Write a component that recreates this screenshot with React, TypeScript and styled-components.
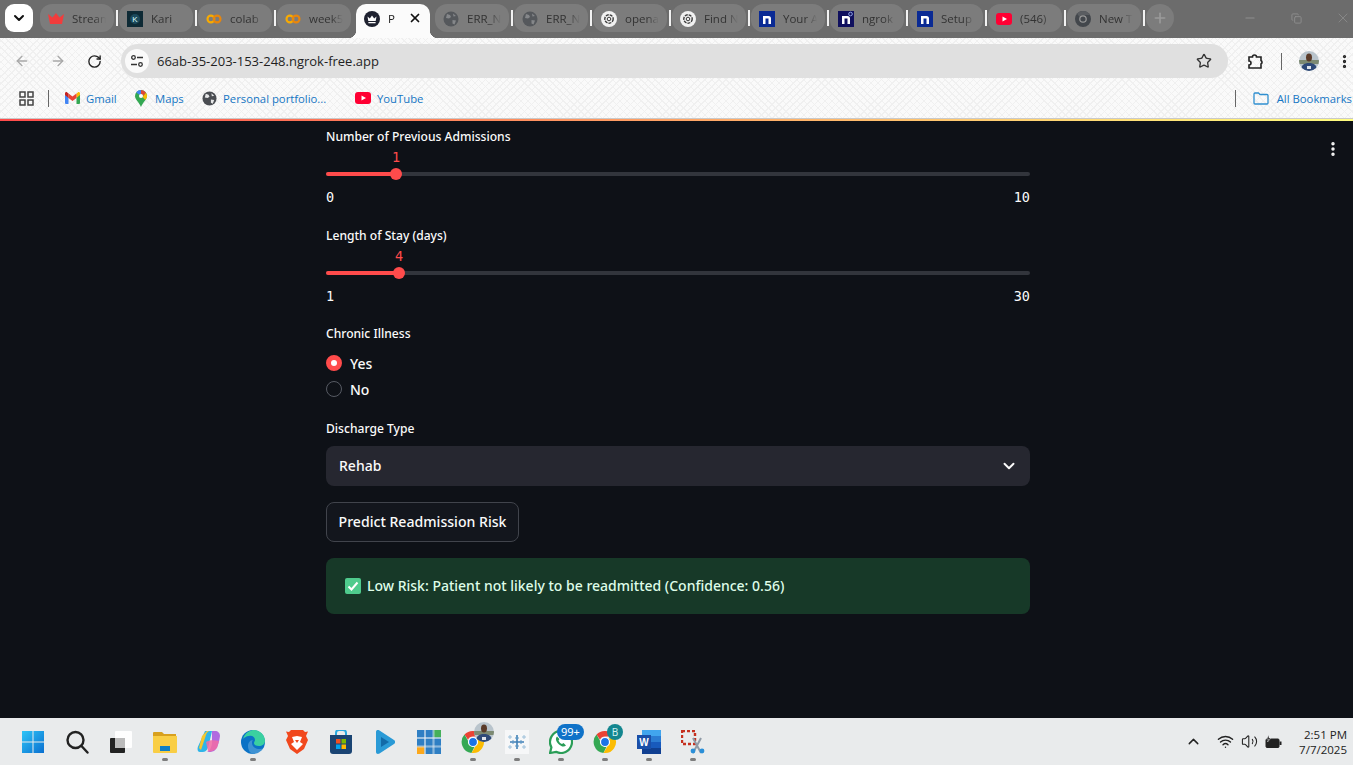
import React from 'react';
import styled, { createGlobalStyle } from 'styled-components';
import {
    ArrowLeft,
    ArrowRight,
    ChevronDown,
    ChevronUp,
    Copy,
    EllipsisVertical,
    Minus,
    Plus,
    RotateCw,
    Star,
    Volume2,
    Wifi,
    X,
} from 'lucide-react';

const GlobalStyle = createGlobalStyle`
    html, body {
        margin: 0;
        padding: 0;
        background: #0e1117;
        overflow: hidden;
    }
    * {
        box-sizing: border-box;
    }
`;

const Crown = ({ color = '#f23c3c', size = 16 }: { color?: string; size?: number }) => (
    <svg width={size} height={size} viewBox="0 0 16 16">
        <path d="M0 3l4.500 3.500L8 2l3.500 4.500L16 3l-2 10H2z" fill={color} />
    </svg>
);

const CrownBadge = () => (
    <svg width="16" height="16" viewBox="0 0 16 16">
        <circle cx="8" cy="8" r="8" fill="#1f2230" />
        <path d="M3.5 5.5l2.3 2L8 4.5l2.2 3 2.3-2-.8 4.5H4.3zM4.4 11h7.2v1.2H4.4z" fill="#fff" />
    </svg>
);

const KariIcon = () => (
    <svg width="16" height="16" viewBox="0 0 16 16">
        <rect width="16" height="16" fill="#0e2a35" />
        <circle cx="8" cy="8" r="5" fill="#1c4a5c" />
        <text x="8" y="11" fontSize="8" fill="#dff" textAnchor="middle" fontFamily="Liberation Sans, sans-serif">K</text>
    </svg>
);

const ColabIcon = () => (
    <svg width="18" height="16" viewBox="0 0 18 16">
        <circle cx="5.5" cy="8" r="3.8" fill="none" stroke="#f9ab00" strokeWidth="2.4" />
        <circle cx="12.5" cy="8" r="3.8" fill="none" stroke="#e8860c" strokeWidth="2.4" />
    </svg>
);

const GlobeIcon = ({ color = '#55585c', land = '#85878a', size = 16 }: { color?: string; land?: string; size?: number }) => (
    <svg width={size} height={size} viewBox="0 0 16 16">
        <circle cx="8" cy="8" r="7.5" fill={color} />
        <path d="M4 3l3 1 1 2-2 1.5-3-.5zM9.5 9l3.5.5-1.5 4-2-1zM10 2.500l3 2.500-2.500.5z" fill={land} />
    </svg>
);

const OpenAiIcon = () => (
    <svg width="16" height="16" viewBox="0 0 16 16">
        <circle cx="8" cy="8" r="8" fill="#f1f1f1" />
        <circle cx="8" cy="8" r="4.200" fill="none" stroke="#3a3a3a" strokeWidth="1.400" strokeDasharray="3 1" />
        <circle cx="8" cy="8" r="1.800" fill="none" stroke="#3a3a3a" strokeWidth="1" />
    </svg>
);

const NgrokIcon = ({ bg = '#0a2a94', dot = false }: { bg?: string; dot?: boolean }) => (
    <svg width="16" height="16" viewBox="0 0 16 16">
        <rect width="16" height="16" fill={bg} />
        <path d="M4 13V5h5.500A2.500 2.500 0 0 1 12 7.500V13H9.500V7.500H6.500V13z" fill="#fff" />
        {dot && <circle cx="12.500" cy="3" r="1.800" fill="none" stroke="#8fa4e8" strokeWidth="1" />}
    </svg>
);

const YoutubeIcon = () => (
    <svg width="16" height="12" viewBox="0 0 16 12">
        <rect width="16" height="12" rx="3" fill="#ff0033" />
        <path d="M6.500 3.500L11 6l-4.500 2.500z" fill="#fff" />
    </svg>
);

const ChromeGray = () => (
    <svg width="16" height="16" viewBox="0 0 16 16">
        <circle cx="8" cy="8" r="8" fill="#43474c" />
        <path d="M8 0a8 8 0 0 1 7 4H8a4 4 0 0 0-3.500 2L2 2.500A8 8 0 0 1 8 0z" fill="#5a5d61" />
        <circle cx="8" cy="8" r="3.800" fill="#9a9a9a" />
        <circle cx="8" cy="8" r="2.600" fill="#43474c" />
    </svg>
);

const ChromeColor = ({ size = 24 }: { size?: number }) => (
    <svg width={size} height={size} viewBox="0 0 24 24">
        <path d="M12 1a11 11 0 0 1 9.500 5.500H12a5.500 5.500 0 0 0-5 3.200L3.500 4.600A11 11 0 0 1 12 1z" fill="#ea4335" />
        <path d="M3.500 4.600L8 12.500a5 5 0 0 0 5.500 4.200L10.500 22.900A11 11 0 0 1 3.500 4.600z" fill="#34a853" />
        <path d="M21.500 6.500A11 11 0 0 1 10.500 22.900l4.500-7.700a5 5 0 0 0 .5-6.500z" fill="#fbbc04" />
        <circle cx="12" cy="12" r="4.500" fill="#1a73e8" stroke="#fff" strokeWidth="1.200" />
    </svg>
);

const GmailIcon = () => (
    <svg width="15" height="12" viewBox="0 0 15 12">
        <path d="M0 2v9a1 1 0 0 0 1 1h2.500V5z" fill="#4285f4" />
        <path d="M15 2v9a1 1 0 0 1-1 1h-2.500V5z" fill="#34a853" />
        <path d="M11.500 1.500V6L15 3V1.500C15 .3 13.700-.3 12.800.4z" fill="#fbbc04" />
        <path d="M3.500 6V1.500L7.500 4.500l4-3V6l-4 3z" fill="#ea4335" />
        <path d="M0 1.500V3l3.500 3V1.500L2.200.4C1.300-.3 0 .3 0 1.500z" fill="#c5221f" />
    </svg>
);

const MapsIcon = () => (
    <svg width="12" height="17" viewBox="0 0 12 17">
        <path d="M6 0a6 6 0 0 1 6 6c0 3.500-4 6-6 11C4 12 0 9.500 0 6a6 6 0 0 1 6-6z" fill="#34a853" />
        <path d="M1.200 2.400A6 6 0 0 1 6 0v4a2 2 0 0 0-1.600.8z" fill="#4285f4" />
        <path d="M6 0a6 6 0 0 1 5 2.800L7.500 7A2 2 0 0 0 6 4z" fill="#ea4335" opacity=".95" />
        <path d="M11 2.800A6 6 0 0 1 12 6c0 1.500-.7 2.700-1.700 4L7.500 7z" fill="#fbbc04" />
        <circle cx="6" cy="6" r="2" fill="#fff" />
    </svg>
);

const FolderIcon = () => (
    <svg width="16" height="14" viewBox="0 0 16 14" fill="none" stroke="#2f8fd0" strokeWidth="1.300">
        <path d="M1 3a1 1 0 0 1 1-1h3.500l1.500 1.500h7a1 1 0 0 1 1 1V12a1 1 0 0 1-1 1H2a1 1 0 0 1-1-1z" />
    </svg>
);

const AppsIcon = () => (
    <svg width="15" height="15" viewBox="0 0 15 15" fill="none" stroke="#444" strokeWidth="1.500">
        <rect x="1" y="1" width="5" height="5" />
        <rect x="9" y="1" width="5" height="5" />
        <rect x="1" y="9" width="5" height="5" />
        <rect x="9" y="9" width="5" height="5" />
    </svg>
);

const SiteInfoIcon = () => (
    <svg width="14" height="14" viewBox="0 0 14 14" fill="none" stroke="#333" strokeWidth="1.300">
        <circle cx="3.500" cy="3.500" r="1.800" />
        <path d="M7 3.500h6M1 10.500h6" />
        <circle cx="10.500" cy="10.500" r="1.800" />
    </svg>
);

const ExtensionIcon = () => (
    <svg width="18" height="18" viewBox="0 0 18 18" fill="none" stroke="#222" strokeWidth="1.600">
        <path d="M3 5h3.500a2 2 0 0 1 4 0H15v3.500a2 2 0 0 1 0 3.500V16H3v-3a2 2 0 0 0 0-4z" />
    </svg>
);

const Avatar = () => (
    <svg width="20" height="20" viewBox="0 0 20 20">
        <clipPath id="avatar-clip">
            <circle cx="10" cy="10" r="10" />
        </clipPath>
        <g clipPath="url(#avatar-clip)">
            <rect width="20" height="20" fill="#b9c4cc" />
            <rect y="9" width="20" height="4" fill="#7d8a72" />
            <ellipse cx="10" cy="6.500" rx="3" ry="4" fill="#5a3a28" />
            <path d="M2 20c0-6 3-8 8-8s8 2 8 8z" fill="#2f4a78" />
            <path d="M8 15h4v3H8z" fill="#dfe4ea" />
        </g>
    </svg>
);

const WindowsIcon = () => (
    <svg width="24" height="24" viewBox="0 0 24 24">
        <defs>
            <linearGradient id="win-grad" x1="0" y1="0" x2="1" y2="1">
                <stop offset="0" stopColor="#2ec5f7" />
                <stop offset="1" stopColor="#0a6fd0" />
            </linearGradient>
        </defs>
        <path d="M1 1h10.500v10.500H1zM12.500 1H23v10.500H12.500zM1 12.500h10.500V23H1zM12.500 12.500H23V23H12.500z" fill="url(#win-grad)" />
    </svg>
);

const SearchIcon = () => (
    <svg width="24" height="24" viewBox="0 0 24 24" fill="none" stroke="#222" strokeWidth="2.400">
        <circle cx="10.500" cy="10" r="8" />
        <path d="M16.500 16l6 6.500" strokeLinecap="round" />
    </svg>
);

const TaskViewIcon = () => (
    <svg width="24" height="24" viewBox="0 0 24 24">
        <rect x="1" y="8" width="15" height="15" rx="1" fill="#222" />
        <rect x="6" y="1" width="17" height="17" rx="1" fill="#fff" opacity=".95" />
        <rect x="6" y="8" width="10" height="10" fill="#bbb" />
    </svg>
);

const ExplorerIcon = () => (
    <svg width="24" height="24" viewBox="0 0 24 24">
        <path d="M0 3a1 1 0 0 1 1-1h8l2 2h12v6H0z" fill="#d8a01e" />
        <path d="M0 6h24v16a1 1 0 0 1-1 1H1a1 1 0 0 1-1-1z" fill="#f9ce45" />
        <path d="M7 16h10v5H7z" fill="#0f7fc4" />
    </svg>
);

const CopilotIcon = () => (
    <svg width="24" height="24" viewBox="0 0 24 24">
        <path d="M8 1h7l-3 13c-1 5-3 8-6 8H3C1 22 0 20 .8 17z" fill="#2fb5e8" />
        <path d="M4 20L9 5c.500-2 2-4 4-4h-3L5 6 2 18z" fill="#f5c62c" />
        <path d="M15 1h3c3 0 5 2 5 5-1 7-3 13-6 15-2 1-5 1-7 1 3-1 4-4 5-8z" fill="#b06be0" />
        <path d="M9 12c3-2 8-2 13-1l-2 7c-3 3-7 4-9 3z" fill="#f26ba5" opacity=".85" />
    </svg>
);

const EdgeIcon = () => (
    <svg width="24" height="24" viewBox="0 0 24 24">
        <circle cx="12" cy="12" r="12" fill="#0b72c6" />
        <path d="M2 9C4 2 10 0 13 0c6 0 11 5 11 11 0 3-3 5-6 5-3 0-5-1-5-3 0-1 1-2 1-3 0-3-3-5-6-4-3 0-5 2-6 3z" fill="#3ad0a0" />
        <path d="M13 24c-3 0-6-3-6-8 0-3 2-6 5-6-1 1-1 2-1 3 0 4 4 6 8 6 2 0 4-1 5-2-2 4-6 7-11 7z" fill="#d8f3fb" opacity=".25" />
    </svg>
);

const BraveIcon = () => (
    <svg width="22" height="24" viewBox="0 0 22 24">
        <path d="M5 0h12l2 2 3-.500L20 6l2 4-4 9-7 5-7-5-4-9 2-4L0 1.500 3 2z" fill="#f1481d" />
        <path d="M11 6l5 1-2 5 3 2-6 6-6-6 3-2-2-5z" fill="#fff" />
        <path d="M9 10h4l-2 3z" fill="#f1481d" />
    </svg>
);

const StoreIcon = () => (
    <svg width="24" height="24" viewBox="0 0 24 24">
        <path d="M7 6V3a3 3 0 0 1 3-3h4a3 3 0 0 1 3 3v3" fill="none" stroke="#29a9e0" strokeWidth="2" />
        <path d="M1 5h22v16a3 3 0 0 1-3 3H4a3 3 0 0 1-3-3z" fill="#1a4473" />
        <rect x="7" y="9" width="4.500" height="4.500" fill="#f25022" />
        <rect x="12.500" y="9" width="4.500" height="4.500" fill="#7fba00" />
        <rect x="7" y="14.500" width="4.500" height="4.500" fill="#00a4ef" />
        <rect x="12.500" y="14.500" width="4.500" height="4.500" fill="#ffb900" />
    </svg>
);

const PlayIcon = () => (
    <svg width="20" height="24" viewBox="0 0 20 24">
        <path d="M1 2c0-2 2-2.500 3.500-1.500L19 10c1.500 1 1.500 3 0 4L4.500 23.500C3 24.500 1 24 1 22z" fill="#2a9ad6" />
        <path d="M6 7l8 5-8 5z" fill="#126aa8" />
    </svg>
);

const GridAppIcon = () => (
    <svg width="24" height="24" viewBox="0 0 24 24">
        <rect width="24" height="24" fill="#2f7fc4" />
        <rect x="16.500" width="7.500" height="7.500" fill="#45b05a" />
        <rect y="16.500" width="7.500" height="7.500" fill="#fca81c" />
        <path d="M7.500 0v24M8.500 0v24M16 0v24M17 0v24M0 7.500h24M0 8.500h24M0 16h24M0 17h24" stroke="#e8eef4" strokeWidth=".6" />
    </svg>
);

const TableauIcon = () => (
    <svg width="24" height="24" viewBox="0 0 24 24">
        <rect width="24" height="24" fill="#f6f7f8" />
        <path d="M12 5v14M5 12h14" stroke="#3f7fb5" strokeWidth="1.600" />
        <path d="M10 8h4M10 16h4M8 10v4M16 10v4" stroke="#5a96c4" strokeWidth="1" />
        <path d="M5 5v4M3 7h4M19 5v4M17 7h4M5 15v4M3 17h4M19 15v4M17 17h4" stroke="#9dc0da" strokeWidth="1" />
    </svg>
);

const WhatsappIcon = () => (
    <svg width="24" height="24" viewBox="0 0 24 24">
        <path d="M12 1a11 11 0 1 1-5 20.800L1 23l1.400-5.700A11 11 0 0 1 12 1z" fill="#fff" stroke="#2a9d57" strokeWidth="2.200" />
        <path d="M8 6.500c-2 2-1 5 1.500 7.500s5.500 3.500 7.500 1.500l-2.500-2.500-1.500 1c-1.500-.5-3-2-3.500-3.500l1-1.500z" fill="#2a9d57" />
    </svg>
);

const WordIcon = () => (
    <svg width="24" height="24" viewBox="0 0 24 24">
        <rect x="5" width="19" height="6" fill="#41a5ee" />
        <rect x="5" y="6" width="19" height="6" fill="#2b7cd3" />
        <rect x="5" y="12" width="19" height="6" fill="#185abd" />
        <rect x="5" y="18" width="19" height="6" fill="#103f91" />
        <rect y="5" width="14" height="14" fill="#1a4fa8" />
        <text x="7" y="16" fontSize="10" fontWeight="700" fill="#fff" textAnchor="middle" fontFamily="Liberation Sans, sans-serif">W</text>
    </svg>
);

const SnipIcon = () => (
    <svg width="24" height="24" viewBox="0 0 24 24">
        <rect x="1" y="1" width="13" height="13" fill="none" stroke="#c5301f" strokeWidth="2.400" strokeDasharray="3 2" />
        <path d="M12 8l8 15M20 8l-8 15" stroke="#8f9aa6" strokeWidth="2" />
        <circle cx="12" cy="21" r="2.400" fill="#2a8fd8" />
        <circle cx="21" cy="21" r="2.400" fill="#2a8fd8" />
    </svg>
);

const BatteryIcon = () => (
    <svg width="17" height="14" viewBox="0 0 17 14">
        <rect x="1" y="4" width="13" height="8.500" rx="1" fill="#222" stroke="#222" />
        <rect x="14.500" y="6.500" width="2" height="3.500" fill="#222" />
        <path d="M4 0L1.500 4h2L2.500 7l3.500-4H4z" fill="#222" stroke="#eceef0" strokeWidth=".5" />
    </svg>
);

const CheckEmoji = () => (
    <svg width="16" height="16" viewBox="0 0 16 16">
        <rect width="16" height="16" rx="2" fill="#4fcb8d" />
        <path d="M3.500 8.500l3 3 6-7" fill="none" stroke="#fff" strokeWidth="2" />
    </svg>
);

// titles as far as the narrow tabs show them
const tabs = [
    { title: 'Stream', icon: <Crown /> },
    { title: 'Kari', icon: <KariIcon /> },
    { title: 'colab', icon: <ColabIcon /> },
    { title: 'week5', icon: <ColabIcon /> },
    { title: 'P', icon: <CrownBadge />, active: true },
    { title: 'ERR_N', icon: <GlobeIcon /> },
    { title: 'ERR_N', icon: <GlobeIcon /> },
    { title: 'opena', icon: <OpenAiIcon /> },
    { title: 'Find N', icon: <OpenAiIcon /> },
    { title: 'Your A', icon: <NgrokIcon /> },
    { title: 'ngrok', icon: <NgrokIcon bg="#10105e" dot /> },
    { title: 'Setup', icon: <NgrokIcon /> },
    { title: '(546)', icon: <YoutubeIcon /> },
    { title: 'New T', icon: <ChromeGray /> },
];

const sliders = [
    { label: 'Number of Previous Admissions', value: 1, min: 0, max: 10, fill: 70 },
    { label: 'Length of Stay (days)', value: 4, min: 1, max: 30, fill: 73 },
];

function App() {
    const dock = [
        { icon: <WindowsIcon /> },
        { icon: <SearchIcon /> },
        { icon: <TaskViewIcon /> },
        { icon: <ExplorerIcon />, open: true },
        { icon: <CopilotIcon /> },
        { icon: <EdgeIcon />, open: true },
        { icon: <BraveIcon /> },
        { icon: <StoreIcon /> },
        { icon: <PlayIcon /> },
        { icon: <GridAppIcon /> },
        {
            icon: <ChromeColor />,
            open: true,
            badge: (
                <PhotoBadge>
                    <Avatar />
                </PhotoBadge>
            ),
        },
        { icon: <TableauIcon />, open: true },
        { icon: <WhatsappIcon />, open: true, badge: <CountBadge>99+</CountBadge> },
        { icon: <ChromeColor />, open: true, badge: <LetterBadge>B</LetterBadge> },
        { icon: <WordIcon />, open: true },
        { icon: <SnipIcon />, open: true },
    ];

    return (
        <Screen>
            <GlobalStyle />
            <TabStrip>
                <TabSearch>
                    <ChevronDown size={16} strokeWidth={3} color="#111" />
                </TabSearch>
                {tabs.map((tab, i) => (
                    <TabSlot key={i}>
                        <Tab $active={tab.active}>
                            <TabIcon>{tab.icon}</TabIcon>
                            <TabTitle $active={tab.active}>{tab.title}</TabTitle>
                            {tab.active && <X size={14} strokeWidth={3} color="#111" />}
                        </Tab>
                        <TabDivider $hidden={tab.active || i === 3} />
                    </TabSlot>
                ))}
                <NewTab>
                    <Plus size={16} strokeWidth={2.5} color="#9a9a9a" />
                </NewTab>
                <WindowControls>
                    <WindowButton>
                        <Minus size={14} color="#8e8e8e" />
                    </WindowButton>
                    <WindowButton>
                        <Copy size={11} color="#8e8e8e" />
                    </WindowButton>
                    <WindowButton>
                        <X size={16} strokeWidth={1.2} color="#8e8e8e" />
                    </WindowButton>
                </WindowControls>
            </TabStrip>
            <BrowserChrome>
                <Toolbar>
                    <NavButton>
                        <ArrowLeft size={16} color="#a8a8a8" />
                    </NavButton>
                    <NavButton>
                        <ArrowRight size={16} color="#a8a8a8" />
                    </NavButton>
                    <NavButton>
                        <RotateCw size={15} strokeWidth={2.2} color="#222" />
                    </NavButton>
                    <AddressBar>
                        <SiteInfo>
                            <SiteInfoIcon />
                        </SiteInfo>
                        <Url>66ab-35-203-153-248.ngrok-free.app</Url>
                        <Star size={16} color="#333" />
                    </AddressBar>
                    <ToolIcons>
                        <ExtensionIcon />
                        <ToolDivider />
                        <Avatar />
                        <EllipsisVertical size={17} strokeWidth={2.6} color="#222" />
                    </ToolIcons>
                </Toolbar>
                <BookmarksBar>
                    <AppsIcon />
                    <BookmarkDivider />
                    <Bookmark $width={69}>
                        <BookmarkIcon>
                            <GmailIcon />
                        </BookmarkIcon>
                        <BookmarkLabel>Gmail</BookmarkLabel>
                    </Bookmark>
                    <Bookmark $width={68}>
                        <BookmarkIcon>
                            <MapsIcon />
                        </BookmarkIcon>
                        <BookmarkLabel>Maps</BookmarkLabel>
                    </Bookmark>
                    <Bookmark $width={154}>
                        <BookmarkIcon>
                            <GlobeIcon size={15} color="#4a4d52" land="#e6e7e8" />
                        </BookmarkIcon>
                        <BookmarkLabel>Personal portfolio...</BookmarkLabel>
                    </Bookmark>
                    <Bookmark>
                        <BookmarkIcon>
                            <YoutubeIcon />
                        </BookmarkIcon>
                        <BookmarkLabel>YouTube</BookmarkLabel>
                    </Bookmark>
                    <AllBookmarks>
                        <BookmarkDivider />
                        <FolderIcon />
                        <BookmarkLabel>All Bookmarks</BookmarkLabel>
                    </AllBookmarks>
                </BookmarksBar>
            </BrowserChrome>
            <Decoration />
            <Page>
                <PageMenu>
                    <EllipsisVertical size={18} strokeWidth={2.6} color="#fafafa" />
                </PageMenu>
                <Column>
                    {sliders.map((s) => (
                        <SliderBlock key={s.label}>
                            <Label>{s.label}</Label>
                            <SliderTrack>
                                <SliderFill style={{ width: s.fill }} />
                                <SliderThumb style={{ left: s.fill - 6 }} />
                                <SliderValue style={{ left: s.fill }}>{s.value}</SliderValue>
                            </SliderTrack>
                            <SliderEnds>
                                <span>{s.min}</span>
                                <span>{s.max}</span>
                            </SliderEnds>
                        </SliderBlock>
                    ))}
                    <RadioBlock>
                        <Label>Chronic Illness</Label>
                        <RadioList>
                            <RadioRow>
                                <RadioMark $checked />
                                <span>Yes</span>
                            </RadioRow>
                            <RadioRow>
                                <RadioMark />
                                <span>No</span>
                            </RadioRow>
                        </RadioList>
                    </RadioBlock>
                    <SelectBlock>
                        <Label>Discharge Type</Label>
                        <Select>
                            <span>Rehab</span>
                            <ChevronDown size={18} strokeWidth={2.6} color="#fafafa" />
                        </Select>
                    </SelectBlock>
                    <PredictButton>Predict Readmission Risk</PredictButton>
                    <Alert>
                        <CheckEmoji />
                        <span>Low Risk: Patient not likely to be readmitted (Confidence: 0.56)</span>
                    </Alert>
                </Column>
            </Page>
            <Taskbar>
                <Dock>
                    {dock.map((item, i) => (
                        <DockSlot key={i}>
                            {item.icon}
                            {item.badge}
                            {item.open && <OpenDot />}
                        </DockSlot>
                    ))}
                </Dock>
                <Tray>
                    <ChevronUp size={17} strokeWidth={2} color="#222" />
                    <TrayIcons>
                        <Wifi size={17} color="#222" />
                        <Volume2 size={17} strokeWidth={1.5} color="#222" />
                        <BatteryIcon />
                    </TrayIcons>
                    <Clock>
                        <span>2:51 PM</span>
                        <span>7/7/2025</span>
                    </Clock>
                </Tray>
            </Taskbar>
        </Screen>
    );
}

const uiFont = `"Noto Sans", "Open Sans", sans-serif`;
const chromeFont = `"Open Sans", "Noto Sans", sans-serif`;
const monoFont = `"DejaVu Sans Mono", "Liberation Mono", monospace`;

const Screen = styled.div`
    width: 1353px;
    height: 765px;
    display: flex;
    flex-direction: column;
    overflow: hidden;
    font-family: ${uiFont};
`;

const TabStrip = styled.div`
    height: 38px;
    flex: none;
    display: flex;
    align-items: flex-start;
    padding: 4px 0 0 5px;
    background: #6c6c6c;
`;

const TabSearch = styled.div`
    width: 28px;
    height: 28px;
    margin-right: 7px;
    border-radius: 9px;
    background: #fff;
    display: flex;
    align-items: center;
    justify-content: center;
`;

const TabSlot = styled.div`
    width: 79px;
    height: 28px;
    flex: none;
    display: flex;
    align-items: center;
`;

const Tab = styled.div<{ $active?: boolean }>`
    position: relative;
    width: 74px;
    height: ${(p) => (p.$active ? '34px' : '28px')};
    flex: none;
    align-self: flex-start;
    display: flex;
    align-items: ${(p) => (p.$active ? 'flex-start' : 'center')};
    gap: 8px;
    padding: ${(p) => (p.$active ? '7px 8px 0' : '2px 8px 0')};
    border-radius: ${(p) => (p.$active ? '10px 10px 0 0' : '12px')};
    background: ${(p) => (p.$active ? '#fbfbfb' : '#7c7c7c')};

    &::before,
    &::after {
        content: '';
        display: ${(p) => (p.$active ? 'block' : 'none')};
        position: absolute;
        bottom: 0;
        width: 8px;
        height: 8px;
    }
    &::before {
        left: -8px;
        background: radial-gradient(circle at 0 0, transparent 8px, #fbfbfb 8.5px);
    }
    &::after {
        right: -8px;
        background: radial-gradient(circle at 100% 0, transparent 8px, #fbfbfb 8.5px);
    }
`;

const TabIcon = styled.span`
    width: 16px;
    height: 16px;
    flex: none;
    display: flex;
    align-items: center;
    justify-content: center;
`;

const TabTitle = styled.span<{ $active?: boolean }>`
    flex: 1;
    min-width: 0;
    white-space: nowrap;
    font-family: ${chromeFont};
    font-size: 11.5px;
    line-height: 16px;
    color: ${(p) => (p.$active ? '#222' : '#333')};
    mask-image: linear-gradient(90deg, #000 65%, transparent);
`;

const TabDivider = styled.span<{ $hidden?: boolean }>`
    width: 2px;
    height: 16px;
    margin-left: 2px;
    background: ${(p) => (p.$hidden ? 'transparent' : '#f2f2f2')};
`;

const NewTab = styled.div`
    width: 28px;
    height: 28px;
    flex: none;
    border-radius: 50%;
    background: #7c7c7c;
    display: flex;
    align-items: center;
    justify-content: center;
`;

const WindowControls = styled.div`
    margin-left: auto;
    margin-right: -13px;
    margin-top: -4px;
    display: flex;
    width: 139px;
    height: 36px;
`;

const WindowButton = styled.div`
    flex: 1;
    display: flex;
    align-items: center;
    justify-content: center;
`;

const BrowserChrome = styled.div`
    height: 81px;
    flex: none;
    display: flex;
    flex-direction: column;
    border-bottom: 1px solid #c9c9c9;
    background-color: #fafafa;
    background-image: repeating-linear-gradient(45deg, #f0f0f0 0 1px, transparent 1px 5px),
        repeating-linear-gradient(-45deg, #f0f0f0 0 1px, transparent 1px 5px);
`;

const Toolbar = styled.div`
    height: 46px;
    flex: none;
    display: flex;
    align-items: center;
    padding: 0 0 0 4px;
`;

const NavButton = styled.div`
    width: 36px;
    display: flex;
    justify-content: center;
`;

const AddressBar = styled.div`
    width: 1107px;
    height: 34px;
    margin: 0 0 0 9px;
    display: flex;
    align-items: center;
    padding: 0 16px 0 4px;
    border-radius: 17px;
    background: #e0e0e0;
`;

const SiteInfo = styled.div`
    width: 24px;
    height: 24px;
    flex: none;
    border-radius: 50%;
    background: #fafafa;
    display: flex;
    align-items: center;
    justify-content: center;
`;

const Url = styled.span`
    flex: 1;
    margin-left: 8px;
    font-family: ${chromeFont};
    font-size: 13px;
    color: #1f1f1f;
`;

const ToolIcons = styled.div`
    display: flex;
    align-items: center;
    margin-left: 18px;
    gap: 17px;
`;

const ToolDivider = styled.span`
    width: 1px;
    height: 17px;
    background: #666;
`;

const BookmarksBar = styled.div`
    height: 34px;
    flex: none;
    display: flex;
    align-items: center;
    padding: 0 0 6px 19px;
`;

const BookmarkDivider = styled.span`
    width: 1px;
    height: 17px;
    margin: 0 15px 0 14px;
    background: #666;
`;

const Bookmark = styled.div<{ $width?: number }>`
    width: ${(p) => (p.$width ? `${p.$width}px` : 'auto')};
    flex: none;
    display: flex;
    align-items: center;
    gap: 6px;
`;

const BookmarkIcon = styled.span`
    width: 16px;
    flex: none;
    display: flex;
    justify-content: center;
`;

const BookmarkLabel = styled.span`
    font-family: ${chromeFont};
    font-size: 11.3px;
    color: #1576c4;
    white-space: nowrap;
`;

const AllBookmarks = styled.div`
    margin-left: auto;
    display: flex;
    align-items: center;
    gap: 8px;
    padding-right: 1px;
    & > span:first-child {
        margin: 0 9px 0 0;
    }
`;

const Decoration = styled.div`
    height: 2px;
    flex: none;
    background: linear-gradient(90deg, #ff4b4b, #fffd80);
`;

const Page = styled.div`
    flex: 1;
    position: relative;
    background: #0e1117;
    color: #fafafa;
    padding-left: 326px;
`;

const PageMenu = styled.div`
    position: absolute;
    top: 19px;
    right: 11px;
`;

const Column = styled.div`
    width: 704px;
    display: flex;
    flex-direction: column;
    padding-top: 6px;
`;

const Label = styled.div`
    font-size: 12.1px;
    font-weight: 500;
    line-height: 20px;
    color: #fafafa;
`;

const SliderBlock = styled.div`
    height: 98.5px;
`;

const SliderTrack = styled.div`
    position: relative;
    height: 4px;
    margin-top: 25px;
    border-radius: 2px;
    background: #32353c;
`;

const SliderFill = styled.div`
    height: 100%;
    border-radius: 2px;
    background: #ff4b4b;
`;

const SliderThumb = styled.span`
    position: absolute;
    top: -4px;
    width: 12px;
    height: 12px;
    border-radius: 50%;
    background: #ff4b4b;
`;

const SliderValue = styled.span`
    position: absolute;
    top: -23px;
    transform: translateX(-50%);
    font-family: ${monoFont};
    font-size: 13.5px;
    line-height: 16px;
    color: #ff4b4b;
`;

const SliderEnds = styled.div`
    display: flex;
    justify-content: space-between;
    margin-top: 13px;
    font-family: ${monoFont};
    font-size: 13.5px;
    line-height: 16px;
    color: #fafafa;
`;

const RadioBlock = styled.div`
    height: 95px;
`;

const RadioList = styled.div`
    display: flex;
    flex-direction: column;
    gap: 6px;
    margin-top: 9px;
`;

const RadioRow = styled.div`
    display: flex;
    align-items: center;
    gap: 8px;
    height: 20px;
    font-size: 14px;
    font-weight: 500;
`;

const RadioMark = styled.span<{ $checked?: boolean }>`
    width: 16px;
    height: 16px;
    border-radius: 50%;
    border: ${(p) => (p.$checked ? '5px solid #ff4b4b' : '1px solid #565a63')};
    background: ${(p) => (p.$checked ? '#fff' : 'transparent')};
`;

const SelectBlock = styled.div`
    display: flex;
    flex-direction: column;
`;

const Select = styled.div`
    height: 40px;
    margin-top: 7px;
    padding: 0 12px 1px 13px;
    display: flex;
    align-items: center;
    justify-content: space-between;
    border-radius: 8px;
    background: #262730;
    font-size: 14px;
    font-weight: 500;
`;

const PredictButton = styled.button`
    align-self: flex-start;
    width: 193px;
    height: 40px;
    margin-top: 16px;
    padding: 0 0 2px;
    border: 1px solid #41444c;
    border-radius: 8px;
    background: #13161d;
    color: #fafafa;
    font-family: ${uiFont};
    font-size: 14.1px;
    font-weight: 500;
`;

const Alert = styled.div`
    height: 56px;
    margin-top: 16px;
    padding: 0 19px 1px;
    display: flex;
    align-items: center;
    gap: 6px;
    border-radius: 8px;
    background: #173928;
    color: #dffde9;
    font-size: 14px;
    font-weight: 500;
`;

const Taskbar = styled.div`
    height: 47px;
    flex: none;
    display: flex;
    align-items: center;
    justify-content: space-between;
    background: #e9ebec;
`;

const Dock = styled.div`
    display: flex;
    padding-left: 11px;
`;

const DockSlot = styled.div`
    position: relative;
    width: 44px;
    height: 47px;
    display: flex;
    align-items: center;
    justify-content: center;
`;

const OpenDot = styled.span`
    position: absolute;
    bottom: 4px;
    left: 19px;
    width: 6px;
    height: 3px;
    border-radius: 2px;
    background: #7d7d7d;
`;

const PhotoBadge = styled.span`
    position: absolute;
    top: 4px;
    right: 1px;
    display: flex;
`;

const CountBadge = styled.span`
    position: absolute;
    top: 6px;
    left: 18px;
    padding: 0 4px;
    height: 16px;
    border-radius: 8px;
    background: #0f72c8;
    color: #fff;
    font-size: 11px;
    line-height: 16px;
`;

const LetterBadge = styled.span`
    position: absolute;
    top: 6px;
    right: 4px;
    width: 16px;
    height: 16px;
    border-radius: 50%;
    background: #13868f;
    color: #cfeef0;
    font-size: 10px;
    line-height: 16px;
    text-align: center;
`;

const Tray = styled.div`
    display: flex;
    align-items: center;
    padding-right: 6px;
`;

const TrayIcons = styled.div`
    display: flex;
    align-items: center;
    gap: 7px;
    margin: 0 17px 0 15px;
`;

const Clock = styled.div`
    display: flex;
    flex-direction: column;
    align-items: flex-end;
    font-family: ${chromeFont};
    font-size: 11.5px;
    line-height: 15px;
    color: #222;
`;

export default App;
